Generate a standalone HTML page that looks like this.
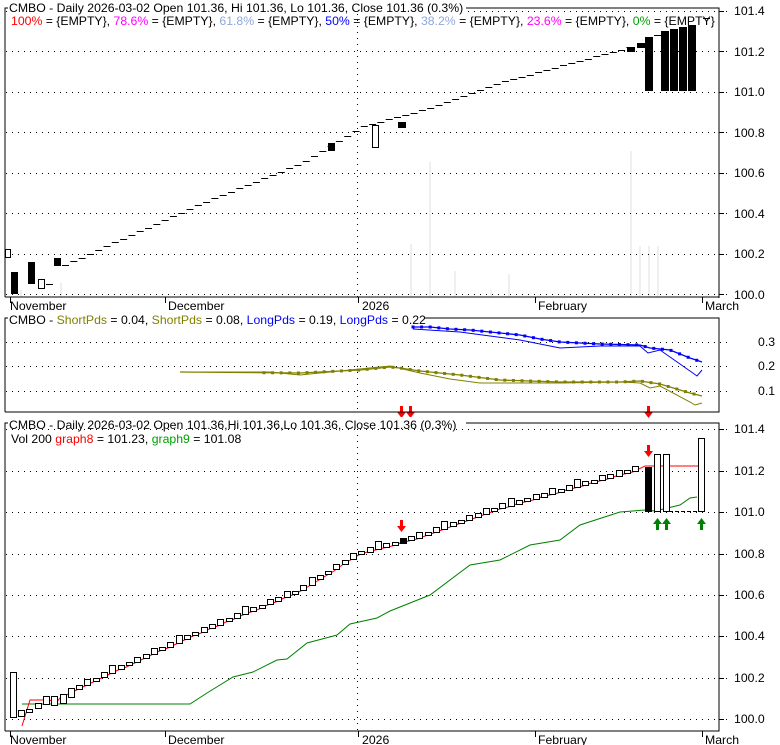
<!DOCTYPE html>
<html><head><meta charset="utf-8"><style>
html,body{margin:0;padding:0;background:#fff;width:780px;height:745px;overflow:hidden}
svg{display:block;font-family:"Liberation Sans",Arial,sans-serif;font-size:12.25px}
</style></head><body>
<svg id="s" width="780" height="745" viewBox="0 0 780 745" xmlns="http://www.w3.org/2000/svg">
<rect width="780" height="745" fill="#fff"/>
<g id="g"></g>
<path d="M5,297 V8 H719 V298 M5,297 H719" fill="none" stroke="#000"/>
<path d="M5,412 V318 H719 V412 H5" fill="none" stroke="#000"/>
<path d="M5,731 V423 H719 V731 H5" fill="none" stroke="#000"/>
<rect x="8" y="2" width="458" height="12" fill="#fff"/>
<text x="9" y="12">CMBO - Daily 2026-03-02 Open 101.36, Hi 101.36, Lo 101.36, Close 101.36 (0.3%)</text>
<text x="11" y="25"><tspan fill="#ff0000">100%</tspan> = {EMPTY}, <tspan fill="#ff00ff">78.6%</tspan> = {EMPTY}, <tspan fill="#8fa8d8">61.8%</tspan> = {EMPTY}, <tspan fill="#0000ff">50%</tspan> = {EMPTY}, <tspan fill="#8fa8d8">38.2%</tspan> = {EMPTY}, <tspan fill="#ff00ff">23.6%</tspan> = {EMPTY}, <tspan fill="#00a000">0%</tspan> = {EMPTY}</text>
<rect x="8" y="312" width="416" height="12" fill="#fff"/>
<text x="9" y="324">CMBO - <tspan fill="#808000">ShortPds</tspan> = 0.04, <tspan fill="#808000">ShortPds</tspan> = 0.08, <tspan fill="#0000ff">LongPds</tspan> = 0.19, <tspan fill="#0000ff">LongPds</tspan> = 0.22</text>
<rect x="8" y="417" width="458" height="12" fill="#fff"/>
<text x="9" y="429">CMBO - Daily 2026-03-02 Open 101.36,Hi 101.36,Lo 101.36, Close 101.36 (0.3%)</text>
<text x="11" y="443">Vol 200 <tspan fill="#ff0000">graph8</tspan> = 101.23, <tspan fill="#00a000">graph9</tspan> = 101.08</text>
<g fill="#000">
<text x="734" y="15">101.4</text><text x="734" y="56">101.2</text><text x="734" y="96">101.0</text><text x="734" y="137">100.8</text><text x="734" y="177">100.6</text><text x="734" y="218">100.4</text><text x="734" y="258">100.2</text><text x="734" y="299">100.0</text>
<text x="758" y="346">0.3</text><text x="758" y="370">0.2</text><text x="758" y="395">0.1</text>
<text x="734" y="433">101.4</text><text x="734" y="475">101.2</text><text x="734" y="516">101.0</text><text x="734" y="558">100.8</text><text x="734" y="599">100.6</text><text x="734" y="640">100.4</text><text x="734" y="682">100.2</text><text x="734" y="723">100.0</text>
<text x="10" y="310">November</text><text x="168" y="310">December</text><text x="362" y="310">2026</text><text x="538" y="310">February</text><text x="705" y="310">March</text>
<text x="10" y="744">November</text><text x="168" y="744">December</text><text x="362" y="744">2026</text><text x="538" y="744">February</text><text x="705" y="744">March</text>
</g>
</svg>
<script>
var NS="http://www.w3.org/2000/svg",G=document.getElementById("g");
function el(t,a){var e=document.createElementNS(NS,t);for(var k in a)e.setAttribute(k,a[k]);G.appendChild(e);return e;}
function pl(pts,c,w){return el("polyline",{points:pts.map(function(p){return p.join(",")}).join(" "),fill:"none",stroke:c,"stroke-width":w||1});}
[[410,244],[429,162],[454,271],[490,290],[508,274],[630,151],[639,246],[648,246],[657,246],[20,290],[60,283]].forEach(function(v){el("rect",{x:v[0],y:v[1],width:2,height:297-v[1],fill:"#efefef"});});
function hgrid(y){el("line",{x1:6,y1:y+.5,x2:728,y2:y+.5,stroke:"#000","stroke-dasharray":"1,5"});}
[11,51,92,132,173,213,254,294].forEach(hgrid);
[342,366,391].forEach(hgrid);
[429,471,512,554,595,636,678,719].forEach(hgrid);
[[8,297],[318,412],[423,731]].forEach(function(r){el("line",{x1:357.5,y1:r[0],x2:357.5,y2:r[1],stroke:"#000","stroke-dasharray":"1,5"});});
[10,165,358,535,702].forEach(function(m){el("line",{x1:m+.5,y1:297,x2:m+.5,y2:303,stroke:"#000"});el("line",{x1:m+.5,y1:731,x2:m+.5,y2:737,stroke:"#000"});});
[11,51,92,132,173,213,254,294,429,471,512,554,595,636,678,719].forEach(function(y){el("line",{x1:719,y1:y+.5,x2:724,y2:y+.5,stroke:"#000"});});
var K=[[22,100.02],[100,100.2],[200,100.42],[300,100.62],[360,100.8],[420,100.88],[500,101.02],[640,101.21]];
function P(x){for(var i=0;i<K.length-1;i++){if(x<=K[i+1][0]){var t=(x-K[i][0])/(K[i+1][0]-K[i][0]);return K[i][1]+t*(K[i+1][1]-K[i][1]);}}return K[K.length-1][1];}
function Y1(p){return 294-(p-100)*202;}
function Y3(p){return 719-(p-100)*207;}
for(var x=62;x<=628;x+=8.3){var y=Math.round(Y1(P(x)+0.03));el("line",{x1:x,y1:y+.5,x2:x+7,y2:y+.5,stroke:"#000"});}
[[5,249,5,8,0],[11,272,6,21,1],[28,262,6,21,1],[38,279,6,9,0],[54,258,6,7,1],[328,143,6,7,1],[372,125,6,22,0],[398,122,7,5,1],[627,47,7,4,1],[637,43,7,4,1],[645,37,7,53,1],[661,31,7,59,1],[670,29,7,61,1],[679,27,7,63,1],[688,25,7,65,1]].forEach(function(b){el("rect",{x:b[0]+.5,y:b[1]+.5,width:b[2],height:b[3],fill:b[4]?"#000":"#fff",stroke:"#000"});});
[[46,284],[654,35],[703,18]].forEach(function(d){el("line",{x1:d[0],y1:d[1]+.5,x2:d[0]+7,y2:d[1]+.5,stroke:"#000"});});
function sq(pts,c){pts.forEach(function(p){el("rect",{x:p[0]-1.5,y:p[1]-1.5,width:3,height:3,fill:c});});}
function samp(a,x0,x1){var r=[];for(var x=x0;x<=x1;x+=8.6){var i=0;while(i<a.length-2&&a[i+1][0]<x)i++;var t=(x-a[i][0])/(a[i+1][0]-a[i][0]);r.push([x,a[i][1]+t*(a[i+1][1]-a[i][1])]);}return r;}
var b1=[[413,327],[430,327],[450,329],[470,330],[490,332],[520,335],[540,339],[560,342],[600,344],[640,345],[650,348],[670,350],[690,358],[702,362]];
pl(b1,"#0000ff",1.3);sq(samp(b1,413,702),"#0000ff");
pl([[413,329],[460,332],[490,336],[520,340],[560,348],[600,346],[640,346],[648,353],[660,350],[690,371],[697,376],[702,370]],"#0000ff",1);
var o1=[[180,372],[300,373],[360,370],[390,367],[400,368],[420,371],[460,375],[500,380],[560,382],[620,382],[640,381],[660,384],[690,393],[702,396]];
pl(o1,"#808000",1.3);sq(samp(o1,264,702),"#808000");
pl([[180,372],[270,372],[300,375],[390,366],[420,373],[450,379],[480,383],[520,383],[560,383],[620,382],[640,383],[650,388],[660,386],[690,402],[695,405],[702,403]],"#808000",1);
function arr(x,y,c,down){var d=down?"M"+(x-1)+","+y+" h3 v6 h3 l-4.5,6 l-4.5,-6 h3 z":"M"+(x-1)+","+(y+12)+" h3 v-6 h3 l-4.5,-6 l-4.5,6 h3 z";el("path",{d:d,fill:c});}
arr(401,406,"#ff0000",1);arr(410,406,"#ff0000",1);arr(648,406,"#ff0000",1);
pl([[22,704],[190,704],[207,693],[233,677],[253,672],[277,660],[287,659],[307,643],[337,635],[350,624],[377,618],[390,611],[430,595],[470,565],[500,560],[530,545],[560,540],[580,525],[620,512],[645,510],[655,511],[680,505],[690,498],[697,497]],"#008000",1);
var rp=[[22,726],[30,700],[50,700],[55,704]];for(var x=60;x<=640;x+=8.3){rp.push([x,Math.round(Y3(P(x)))+1]);}rp.push([645,466],[698,466]);
pl(rp,"#ff0000",1);
var n=0;for(var x=18;x<=636;x+=8.3){n++;var p=P(x+3);var h=[4,6,3,5,8,4,3,5][n%8];var y=Math.round(Y3(p))-h+1;if(n==5||n==6||n==7)h=9;el("rect",{x:Math.round(x)+.5,y:y+.5,width:6,height:h,fill:(x>395&&x<403)?"#000":"#fff",stroke:"#000"});}
el("rect",{x:10.5,y:672.5,width:6,height:45,fill:"#fff",stroke:"#000"});
el("rect",{x:645.5,y:467.5,width:6,height:44,fill:"#000",stroke:"#000"});
[[654,454],[663,454],[698,438]].forEach(function(b){el("rect",{x:b[0]+.5,y:b[1]+.5,width:6,height:511-b[1],fill:"#fff",stroke:"#000"});});
el("line",{x1:669,y1:511.5,x2:698,y2:511.5,stroke:"#000","stroke-dasharray":"4,2"});
arr(401,520,"#ff0000",1);arr(648,445,"#ff0000",1);
arr(657,518,"#008000",0);arr(666,518,"#008000",0);arr(701,518,"#008000",0);
</script>
</body></html>
